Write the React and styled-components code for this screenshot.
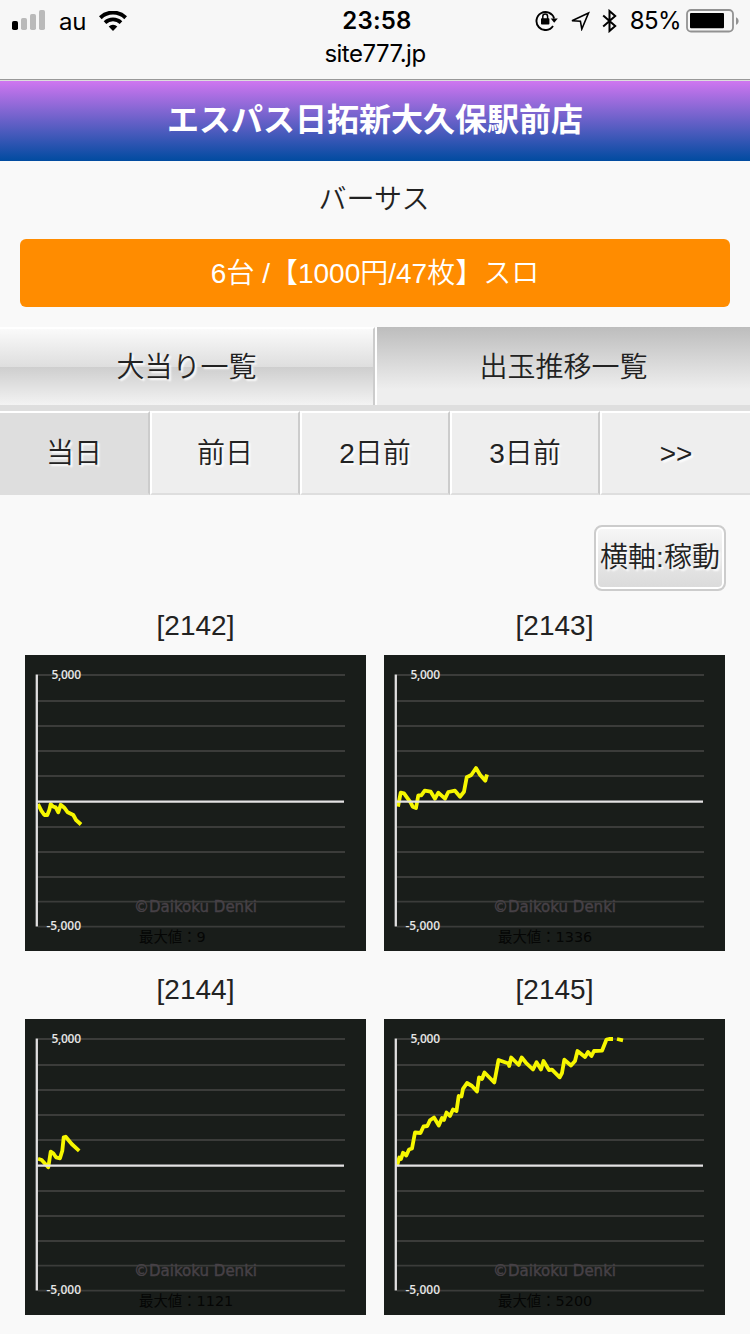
import React from 'react'
import styled, { createGlobalStyle, css } from 'styled-components'

const gridLines = [20, 46, 71, 96, 121, 172, 197, 222, 246.7, 271.7]

const machines = [
    {
        no: 2142,
        max: 9,
        lines: ['13,149 16.3,155.7 19.3,160 22.3,160 24.3,155 25.7,149 28.3,151.7 30.7,152.3 33.3,157.3 35.7,149.7 39.3,152.7 42.7,157.3 48.3,160 51,165 56,169.5'],
    },
    {
        no: 2143,
        max: 1336,
        lines: ['14,151.7 16.7,137.7 20,138.3 26.7,147.7 28.7,151.7 32,153 34.3,140.3 37.3,140.3 40.7,135.7 46.7,136.7 51,143.7 54.3,137.7 61,143.7 64.3,137 71,135.7 76,141.7 80,136.7 82.7,122.3 87.3,120 92,113 96,119.7 101.3,125.7 103,119.5'],
    },
    {
        no: 2144,
        max: 1121,
        lines: ['13,139.7 16.7,141 21,145.7 23.3,148.3 25.7,132.7 28.3,134.3 31,138.3 35,139.3 37.3,131.7 38.7,118.3 40.7,117.7 46.7,125 54.2,131.8'],
    },
    {
        no: 2145,
        max: 5200,
        lines: [
            '13,147 15.3,138.5 17,140 19,133.8 22.3,136.5 25,130.5 28,129.5 31,113.5 36.5,114 39.5,107.5 43.3,107 46,101.2 50,98.5 54.8,106.5 58,99 60,101 62.5,93.5 66,97 69,90.5 72.5,92 74.7,77 77.5,77.5 79,69.8 83,64 88,67 93,72.5 95,58.5 98,60 100.5,53.5 110.3,63.5 114.5,41 124.5,44.5 125.2,47 127.2,38.5 134.7,46 137.7,38.5 142,43.8 149,50.5 152.5,43.3 157,50.5 159.5,42 165,51 168,50.7 175.7,58.3 178,54 180.3,40.7 187,46.5 191,42 193.5,32 201,38 204,33 207.5,37 210,32 218,31.7 222.5,20.5 225,20 229,20',
            '233,20 239,21.3',
        ],
    },
]

const days = ['当日', '前日', '2日前', '3日前', '>>']

function StatusBar() {
    return (
        <Status>
            <div className="status_row">
                <div className="side">
                    <svg width="34" height="24" viewBox="0 0 34 24">
                        <rect x="0" y="15" width="6" height="9" rx="1.8" fill="#000" />
                        <rect x="9" y="12" width="6" height="12" rx="1.8" fill="#bababa" />
                        <rect x="18" y="8" width="6" height="16" rx="1.8" fill="#bababa" />
                        <rect x="27" y="4" width="6" height="20" rx="1.8" fill="#bababa" />
                    </svg>
                    <Carrier>au</Carrier>
                    <svg width="28" height="20" viewBox="0 0 28 20">
                        <path d="M1.3 6.7A18.4 18.4 0 0 1 26.7 6.7" fill="none" stroke="#000" strokeWidth="4" />
                        <path d="M6 11.6A11.8 11.8 0 0 1 22 11.6" fill="none" stroke="#000" strokeWidth="3.8" />
                        <path d="M9.7 15.4A6.2 6.2 0 0 1 18.3 15.4L14 20Z" />
                    </svg>
                </div>
                <Clock>23:58</Clock>
                <div className="side right">
                    <svg width="23" height="22" viewBox="0 0 23 22">
                        <path d="M18 17A9 9 0 1 1 19.1 9.5" fill="none" stroke="#000" strokeWidth="1.9" />
                        <path d="M15.7 9.4H22.8L19.2 13.8Z" />
                        <rect x="6" y="9.2" width="8.4" height="6.4" rx=".8" />
                        <path d="M7.8 10V7.4a2.4 2.4 0 0 1 4.8 0V10" fill="none" stroke="#000" strokeWidth="1.5" />
                    </svg>
                    <svg className="arrow" width="20" height="20" viewBox="0 0 20 20">
                        <path d="M18.5 2L2 9.7L10.4 10.2L11.8 18Z" fill="none" stroke="#000" strokeWidth="1.6" />
                    </svg>
                    <svg className="bluetooth" width="15" height="24" viewBox="0 0 15 24">
                        <path d="M1.2 6.5L13.2 17L7.5 22V2L13.2 7L1.2 17.5" fill="none" stroke="#000" strokeWidth="2" />
                    </svg>
                    <Percent>85%</Percent>
                    <svg width="54" height="24" viewBox="0 0 54 24">
                        <rect x="1" y="1" width="46" height="21.5" rx="4" fill="none" stroke="#929292" strokeWidth="1.8" />
                        <rect x="4" y="4" width="34" height="15.3" rx="1" />
                        <path d="M50 8.2C53.5 9.5 53.5 14.5 50 15.8Z" fill="#929292" />
                    </svg>
                </div>
            </div>
            <Address>site777.jp</Address>
        </Status>
    )
}

function Chart({ lines, max }) {
    return (
        <svg width="341" height="296" viewBox="0 0 341 296">
            <rect width="341" height="296" fill="#191d1a" />
            {gridLines.map((y) => (
                <line key={y} x1="13" x2="320" y1={y} y2={y} stroke="#3b3c3a" strokeWidth="1.8" />
            ))}
            <Watermark x="109" y="256.5" textLength="123">©Daikoku Denki</Watermark>
            <MaxValue x="114" y="287">最大値：{max}</MaxValue>
            <AxisLabel x="26.5" y="23.5" textLength="29.5">5,000</AxisLabel>
            <AxisLabel x="21.5" y="275" textLength="34.5">-5,000</AxisLabel>
            {lines.map((points) => (
                <polyline key={points} points={points} fill="none" stroke="#f6f600" strokeWidth="3.8" strokeLinejoin="round" />
            ))}
            <line x1="11.8" x2="11.8" y1="19.5" y2="271.5" stroke="#e0dfe0" strokeWidth="2.3" />
            <line x1="11" x2="319" y1="146.6" y2="146.6" stroke="#e4e2e3" strokeWidth="2.4" />
        </svg>
    )
}

function App() {
    return (
        <Container>
            <GlobalStyle />
            <StatusBar />
            <Header>エスパス日拓新大久保駅前店</Header>
            <ModelName>バーサス</ModelName>
            <Rate>6台 /【1000円/47枚】スロ</Rate>
            <Tabs>
                <Tab><span>大当り一覧</span></Tab>
                <Tab $active><span>出玉推移一覧</span></Tab>
            </Tabs>
            <Days>
                {days.map((day, i) => (
                    <Day key={day} $active={i === 0}><span>{day}</span></Day>
                ))}
            </Days>
            <Tools>
                <AxisButton>横軸:稼動</AxisButton>
            </Tools>
            <Charts>
                {machines.map((machine) => (
                    <Machine key={machine.no}>
                        <h2>[{machine.no}]</h2>
                        <Chart lines={machine.lines} max={machine.max} />
                    </Machine>
                ))}
            </Charts>
        </Container>
    )
}

export default App;

const GlobalStyle = createGlobalStyle`
* {
    box-sizing: border-box;
}
body {
    margin: 0;
    background: #f9f9f9;
}
`;

const Container = styled.div`
width: 750px;
height: 1334px;
overflow: hidden;
background: #f9f9f9;
color: #222;
font-family: 'Liberation Sans', 'Noto Sans CJK JP', sans-serif;
font-size: 28px;
font-weight: 350;
svg {
    display: block;
    flex: none;
}
`;

const Status = styled.div`
height: 81px;
background: #f7f7f7;
border-bottom: 1px solid #dcdcdc;
box-shadow: inset 0 -1px #999;
color: #000;
font-family: Inter, Roboto, sans-serif;
font-weight: 400;
.status_row {
    display: grid;
    grid-template-columns: 1fr auto 1fr;
    height: 40px;
    padding: 0 10px 0 12px;
}
.side {
    display: flex;
    align-items: center;
}
.side > svg:first-child {
    margin-top: -6px;
}
.side:first-child > svg:last-child {
    margin-top: -1px;
}
.side.right > svg:first-child {
    margin-top: -2px;
}
.right {
    justify-content: flex-end;
}
.arrow {
    margin-left: 12px;
}
.bluetooth {
    margin: 0 13px 0 12px;
}
`;

const Carrier = styled.span`
margin: 0 13px 0 13px;
font-size: 24px;
line-height: 41px;
letter-spacing: -0.3px;
`;

const Clock = styled.span`
padding-left: 2px;
font-size: 24px;
font-weight: 600;
line-height: 42px;
letter-spacing: 0.2px;
`;

const Percent = styled.span`
margin-right: 5px;
font-size: 24px;
line-height: 40px;
letter-spacing: -0.6px;
`;

const Address = styled.div`
font-size: 24px;
line-height: 28px;
letter-spacing: -0.5px;
text-align: center;
`;

const Header = styled.h1`
height: 80px;
margin: 0;
background: linear-gradient(#cf76f0, #004ba0);
color: #fff;
font-size: 32px;
font-weight: 700;
line-height: 79px;
text-align: center;
`;

const ModelName = styled.div`
height: 78px;
padding-right: 2px;
line-height: 78px;
text-align: center;
`;

const Rate = styled.div`
height: 68px;
margin: 0 20px 20px;
border-radius: 6px;
background: #ff8c00;
color: #fff;
line-height: 69px;
text-align: center;
`;

const Tabs = styled.div`
display: grid;
grid-template-columns: 1fr 1fr;
grid-template-rows: 78px;
height: 84px;
border-bottom: 6px solid #dedede;
`;

const Tab = styled.div`
display: flex;
align-items: flex-start;
justify-content: center;
border-top: 2px solid #fff;
border-right: 2px solid #ccc;
background: linear-gradient(#fafafa, #dedede 50%, #cecece 50%, #f3f3f3);
line-height: 78px;
text-shadow: 2px 2px 2px #fff;
${({ $active }) => $active && css`
    border-top: 0;
    border-right: 0;
    border-left: 2px solid #fff;
    background: linear-gradient(#bdbdbd, #eee 80%);
    line-height: 82px;
    text-shadow: none;
`}
`;

const Days = styled.div`
display: grid;
grid-template-columns: repeat(5, 1fr);
grid-template-rows: 84px;
height: 84px;
`;

const Day = styled.div`
display: flex;
align-items: flex-start;
justify-content: center;
border: 2px solid #fff;
border-right-color: #ccc;
border-bottom-color: #dedede;
background: #eee;
line-height: 82px;
text-shadow: 2px 2px 2px #fff;
&:last-child {
    border-right: 0;
}
${({ $active }) => $active && css`
    border-left: 0;
    background: #dedede;
`}
`;

const Tools = styled.div`
display: flex;
justify-content: flex-end;
padding: 30px 24px 4px;
`;

const AxisButton = styled.button`
width: 132px;
height: 66px;
padding: 0;
border: 2px solid #ccc;
border-radius: 8px;
background: linear-gradient(#f7f7f7, #dadada);
box-shadow: inset 0 0 0 2px #fff;
color: #222;
font: inherit;
line-height: 62px;
text-shadow: 2px 2px 2px #fff;
white-space: nowrap;
`;

const Charts = styled.div`
display: grid;
grid-template-columns: 341px 341px;
column-gap: 18px;
row-gap: 8px;
justify-content: center;
`;

const Machine = styled.div`
h2 {
    height: 60px;
    margin: 0;
    font-size: 28px;
    font-weight: 400;
    line-height: 61px;
    text-align: center;
}
`;

const AxisLabel = styled.text`
fill: #e6e6e6;
font: 600 12px 'Open Sans', 'Noto Sans', sans-serif;
`;

const Watermark = styled.text`
fill: #474147;
stroke: #474147;
stroke-width: 0.4px;
font: 15px 'DejaVu Sans', sans-serif;
`;

const MaxValue = styled.text`
fill: #050605;
font: 14.4px 'DejaVu Sans', 'Noto Sans CJK JP', sans-serif;
`;
